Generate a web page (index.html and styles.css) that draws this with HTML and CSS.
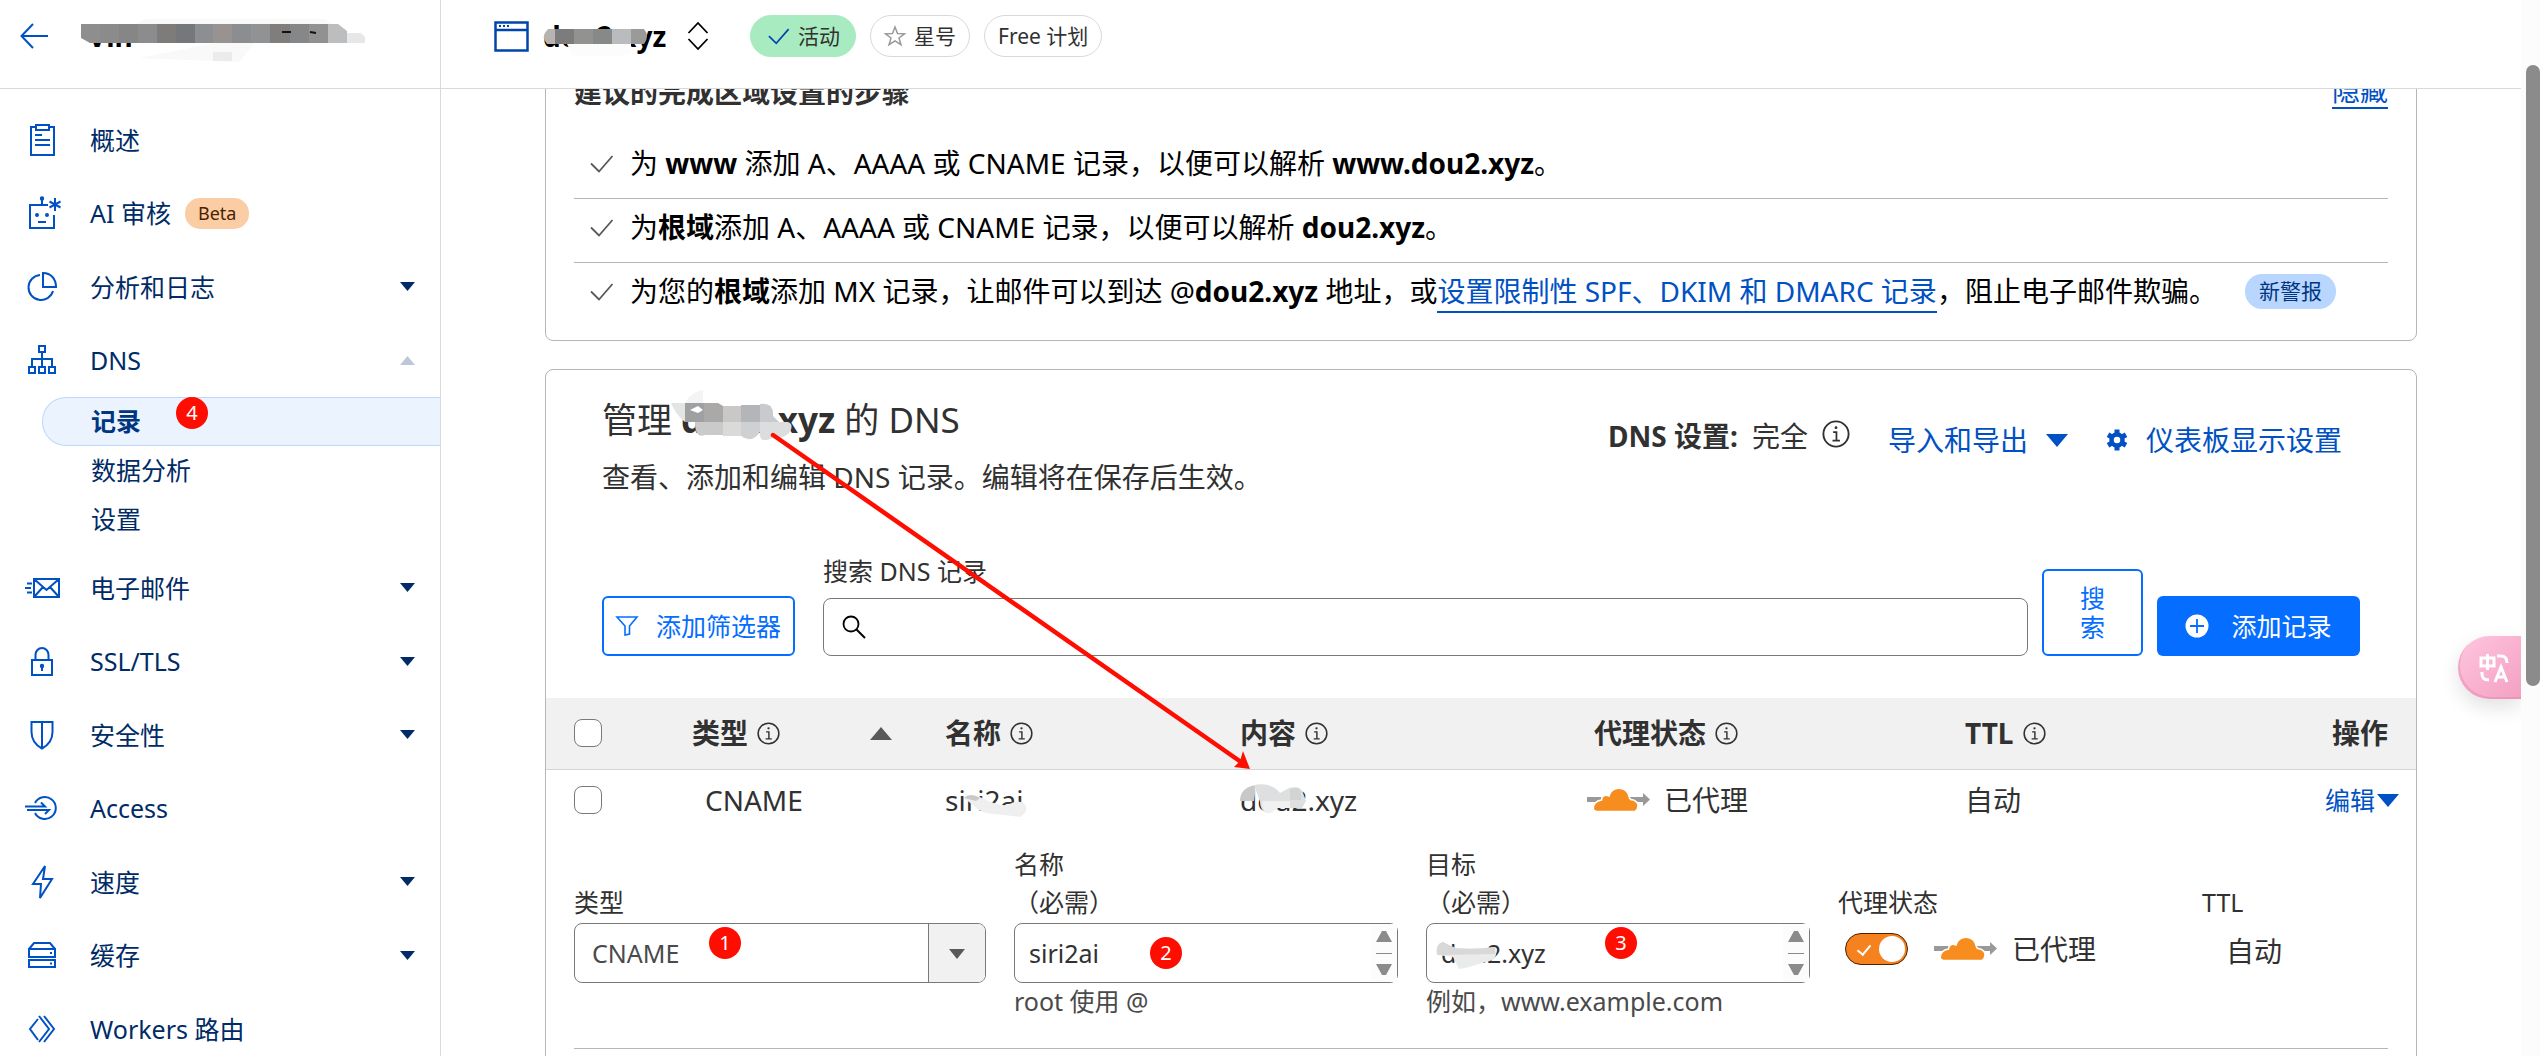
FILE: index.html
```html
<!DOCTYPE html>
<html lang="zh-CN">
<head>
<meta charset="utf-8">
<title>DNS 记录</title>
<link rel="stylesheet" href="styles.css">
</head>
<body>
<svg class="defs" aria-hidden="true">
  <symbol id="info" viewBox="0 0 24 24"><circle cx="12" cy="12" r="10.8" fill="none" stroke="currentColor" stroke-width="1.6"/><path d="M9.5 10.3h2.9v7.2M9 17.6h6.4" fill="none" stroke="currentColor" stroke-width="1.5"/><circle cx="12" cy="6.6" r="1.2" fill="currentColor"/></symbol>
  <symbol id="check" viewBox="0 0 24 18"><path d="M1 8.5l8 8L22.500 1" fill="none" stroke="currentColor" stroke-width="1.8"/></symbol>
  <symbol id="down" viewBox="0 0 22 13"><path d="M0 0h22L11 13z" fill="currentColor"/></symbol>
  <symbol id="up" viewBox="0 0 22 13"><path d="M0 13h22L11 0z" fill="currentColor"/></symbol>
  <symbol id="cloud" viewBox="0 0 63 24"><path d="M0 9h50v5H0zM50 9h6V5l7 6.500-7 6.500v-4h-6z" fill="#999"/><path d="M9 23.500h39c4-3 4.500-9-1.500-11.500-2 0-3.500-.5-4-2C40.500-3 24-2.500 22 8c-4-2-7.500 0-7.500 4C9 12.500 5.500 17 6.500 22z" fill="#f78d1e" stroke="#fff" stroke-width="1.500"/></symbol>
</svg>
<div class="app">
  <aside class="sidebar">
    <div class="account">
      <a class="back" href="#" aria-label="返回"><svg width="28" height="26" viewBox="0 0 28 26"><path d="M13 1L1.500 13 13 25M1.500 13H28" fill="none" stroke="currentColor" stroke-width="2"/></svg></a>
      <span class="masked account-name">Vin
        <svg class="mosaic account-mosaic" width="290" height="46" viewBox="0 0 290 46" aria-hidden="true">
          <path d="M64 0H244l10 7H52zM134 24h40l-16 19q-50-2-100-4z" fill="#f8f9f8"/>
          <path d="M0 5h20v19H9l-9-5z" fill="#8e8e8e"/><path d="M19 5h19v19H19z" fill="#8b8b8c"/><path d="M38 5h19v19H38z" fill="#868687"/><path d="M57 5h19v19H57z" fill="#8b8c8e"/><path d="M76 5h19v19H76z" fill="#7e7c7a"/><path d="M95 5h19v19H95z" fill="#76777a"/><path d="M114 5h18v19h-18z" fill="#8d8e91"/><path d="M132 5h19v19h-19z" fill="#989390"/><path d="M151 5h19v19h-19z" fill="#8b8d90"/><path d="M170 5h19v19h-19z" fill="#909294"/><path d="M189 5h20v19h-20z" fill="#7f7e7d"/><path d="M209 5h19v19h-19z" fill="#868788"/><path d="M228 5h19v19h-19z" fill="#919191"/><path d="M247 5h10l9 7v12h-19z" fill="#bcbdbf"/><path d="M266 14h14l4 4v6h-18z" fill="#e7e7e7"/>
          <path d="M132 33h19v9h-19z" fill="#ebebea"/><path d="M201 13h9M229 13l6 1" stroke="#111" stroke-width="2"/>
        </svg>
      </span>
    </div>
    <nav aria-label="主导航">
      <ul class="nav">
        <li><a class="nav-link" href="#"><svg class="nav-icon" viewBox="0 0 36 36"><path d="M12 5H7v28h23V5h-5M12 3h13v5H12zM11 13h7M11 18h15M11 23h15"/></svg>概述</a></li>
        <li><a class="nav-link" href="#"><svg class="nav-icon" viewBox="0 0 36 36"><path d="M24 10H6v23h24V20M18 10V3"/><circle cx="18" cy="3.500" r="1.200"/><path d="M14 27h8M31 3v13M25.500 6.500l11 6M36.500 6.500l-11 6"/><circle cx="13" cy="20" r="1"/><circle cx="23" cy="20" r="1"/></svg>AI 审核<span class="beta">Beta</span></a></li>
        <li><a class="nav-link" href="#"><svg class="nav-icon" viewBox="0 0 36 36"><path d="M16 6a12.500 12.500 0 1 0 13 16M19 4v14h13C32 10 27 4 19 4z"/></svg>分析和日志<svg class="caret"><use href="#down"/></svg></a></li>
        <li>
          <a class="nav-link open" href="#"><svg class="nav-icon" viewBox="0 0 36 36"><path d="M15 4h6v6h-6zM18 10v14M8 24v-7h20v7M5 25h6v6H5zM15 25h6v6h-6zM25 25h6v6h-6z"/></svg>DNS<svg class="caret"><use href="#up"/></svg></a>
          <ul class="subnav">
            <li><a class="sub-link current" href="#" aria-current="page">记录<span class="marker marker-4">4</span></a></li>
            <li><a class="sub-link" href="#">数据分析</a></li>
            <li><a class="sub-link" href="#">设置</a></li>
          </ul>
        </li>
        <li><a class="nav-link" href="#"><svg class="nav-icon" viewBox="0 0 36 36"><path d="M10 9h25v18H10zM10 9l12.500 11L35 9M10 27l9-10M35 27l-9-10M3 13.500h5M1 18h6M3 22.500h5"/></svg>电子邮件<svg class="caret"><use href="#down"/></svg></a></li>
        <li><a class="nav-link" href="#"><svg class="nav-icon" viewBox="0 0 36 36"><path d="M8 17h20v15H8zM11.500 17v-5a6.500 7 0 0 1 13 0v5M18 24v4"/><circle cx="18" cy="23" r="1.200"/></svg>SSL/TLS<svg class="caret"><use href="#down"/></svg></a></li>
        <li><a class="nav-link" href="#"><svg class="nav-icon" viewBox="0 0 36 36"><path d="M7.500 5h21v10c0 7-4 13-10.500 16.500C11.500 28 7.500 22 7.500 15zM18 5v26"/></svg>安全性<svg class="caret"><use href="#down"/></svg></a></li>
        <li><a class="nav-link" href="#"><svg class="nav-icon" viewBox="0 0 36 36"><path d="M11 13a11 11 0 1 1 0 10M1 16.500h20l-4-4M3 20h22l-4 4"/></svg>Access</a></li>
        <li><a class="nav-link" href="#"><svg class="nav-icon" viewBox="0 0 36 36"><path d="M21 2L9 20h8l-1 14 12-19h-9z"/></svg>速度<svg class="caret"><use href="#down"/></svg></a></li>
        <li><a class="nav-link" href="#"><svg class="nav-icon" viewBox="0 0 36 36"><path d="M5 12h26v8H5zM5 23h26v7H5zM5 12l5-6h16l5 6M26 16h2M26 26.500h2"/></svg>缓存<svg class="caret"><use href="#down"/></svg></a></li>
        <li><a class="nav-link" href="#"><svg class="nav-icon" viewBox="0 0 36 36"><path d="M14 8L6 18l8 11M15 5l10 13-10 13M20 5l10 13-10 13"/></svg>Workers 路由</a></li>
      </ul>
    </nav>
  </aside>

  <div class="content">
    <header class="topbar">
      <svg class="site-icon" width="35" height="31" viewBox="0 0 35 31"><path d="M1.500 1.500h32v28h-32zM1.500 9h32" fill="none" stroke="currentColor" stroke-width="2.500"/><path d="M5 5h2M9 5h2M13 5h2" stroke="currentColor" stroke-width="2"/></svg>
      <span class="masked domain">dou2.xyz
        <svg class="mosaic domain-mosaic" width="106" height="28" viewBox="0 0 106 28" aria-hidden="true"><path d="M24 15h64v8l-8 4H30z" fill="#fcfcfc"/><path d="M12 0H5Q-3 8 4 15h8z" fill="#b6b3b1"/><path d="M12 0h19v15H12z" fill="#7c7c7c"/><path d="M31 0h19v15H31z" fill="#929290"/><path d="M50 0h19v15H50z" fill="#868987"/><path d="M69 0h19v15H69z" fill="#babbbe"/><path d="M88 0h13q6 7 0 15H88z" fill="#9a9a99"/></svg>
      </span>
      <button class="switcher" aria-label="切换站点"><svg width="22" height="28" viewBox="0 0 22 28"><path d="M1.500 11L11 1l9.500 10M1.500 17L11 27l9.500-10" fill="none" stroke="currentColor" stroke-width="1.800"/></svg></button>
      <span class="chip chip-active"><svg width="22" height="17"><use href="#check"/></svg>活动</span>
      <button class="chip"><svg width="22" height="22" viewBox="0 0 22 22"><path d="M11 2l2.500 6.500 7 .3-5.500 4.200 2 6.700-6-3.900-6 3.900 2-6.700L1.500 8.800l7-.3z" fill="none" stroke="#999" stroke-width="1.500"/></svg>星号</button>
      <span class="chip">Free 计划</span>
    </header>

    <main class="page">
      <section class="card steps">
        <div class="steps-head"><h2>建议的完成区域设置的步骤</h2><a class="link" href="#">隐藏</a></div>
        <ul class="step-list">
          <li><svg class="step-check"><use href="#check"/></svg><span>为 <strong>www</strong> 添加 A、AAAA 或 CNAME 记录，以便可以解析 <strong>www.dou2.xyz</strong>。</span></li>
          <li><svg class="step-check"><use href="#check"/></svg><span>为<strong>根域</strong>添加 A、AAAA 或 CNAME 记录，以便可以解析 <strong>dou2.xyz</strong>。</span></li>
          <li><svg class="step-check"><use href="#check"/></svg><span>为您的<strong>根域</strong>添加 MX 记录，让邮件可以到达 @<strong>dou2.xyz</strong> 地址，或<a class="link" href="#">设置限制性 SPF、DKIM 和 DMARC 记录</a>，阻止电子邮件欺骗。</span><span class="alert">新警报</span></li>
        </ul>
      </section>

      <section class="card dns">
        <div class="dns-head">
          <div>
            <h1>管理 <span class="masked"><strong>dou2.xyz</strong>
              <svg class="mosaic title-mosaic" width="122" height="52" viewBox="0 0 122 52" aria-hidden="true"><path d="M14 13Q20 2 32 0v13z" fill="#f4f4f4"/><path d="M0 13h14v19Q4 24 0 13z" fill="#e3e5e4"/><path d="M14 13h20v19H14z" fill="#9fa0a1"/><path d="M33 13h14l5 3v16H33z" fill="#aba9a7"/><path d="M52 16h18v16H52z" fill="#c9c8c6"/><path d="M70 15h19v17H70z" fill="#b4b5b8"/><path d="M89 14q14-2 13 12l6 6H89z" fill="#c8cacd"/><path d="M24 32h28v13H34q-10 4-10-13z" fill="#cacaca"/><path d="M52 32h18v14H52z" fill="#dadad9"/><path d="M70 32h19v10q-8 12-19 4z" fill="#cfd0d1"/><path d="M89 32h28q6 2 2 10-8 8-18 6-12 6-12-4z" fill="#dcdddf"/><path d="M19 20l8-4 5 4-5 3z" fill="#fff"/></svg>
            </span> 的 DNS</h1>
            <p class="subtitle">查看、添加和编辑 DNS 记录。编辑将在保存后生效。</p>
          </div>
          <div class="dns-actions">
            <p class="dns-mode"><strong>DNS 设置:</strong><span>完全</span><svg class="info-lg"><use href="#info"/></svg></p>
            <button class="text-button">导入和导出<svg class="tri"><use href="#down"/></svg></button>
            <button class="text-button"><svg width="22" height="22" viewBox="-11 -11 22 22" fill="none" stroke="currentColor"><circle r="5.500" stroke-width="4.500"/><path d="M0-10.500v5M0 10.500v-5M9-5.200L5-3M-9 5.200L-5 3M9 5.200L5 3M-9-5.200L-5-3" stroke-width="5"/></svg>仪表板显示设置</button>
          </div>
        </div>

        <form class="toolbar">
          <button class="btn btn-outline" type="button"><svg width="22" height="20" viewBox="0 0 22 20"><path d="M1 1h20l-7.500 9v8L9 19v-9z" fill="none" stroke="currentColor" stroke-width="1.600"/></svg>添加筛选器</button>
          <div class="search">
            <label for="q">搜索 DNS 记录</label>
            <div class="search-box"><svg width="24" height="24" viewBox="0 0 24 24"><circle cx="9" cy="9" r="7.500" fill="none" stroke="currentColor" stroke-width="1.800"/><path d="M14.500 14.500L23 23" stroke="currentColor" stroke-width="2"/></svg><input id="q" type="text"></div>
          </div>
          <button class="btn btn-outline btn-search" type="button">搜索</button>
          <button class="btn btn-primary" type="button"><svg width="24" height="24" viewBox="0 0 24 24"><circle cx="12" cy="12" r="11.500" fill="#fff"/><path d="M12 5v14M5 12h14" stroke="#056dff" stroke-width="1.800"/></svg>添加记录</button>
        </form>

        <table class="records">
          <colgroup><col class="c-check"><col class="c-type"><col class="c-name"><col class="c-content"><col class="c-proxy"><col><col class="c-action"></colgroup>
          <thead>
            <tr>
              <th><input class="box" type="checkbox" aria-label="全选"></th>
              <th><div class="sort"><span class="th">类型<svg class="info"><use href="#info"/></svg></span><svg class="sort-icon"><use href="#up"/></svg></div></th>
              <th><span class="th">名称<svg class="info"><use href="#info"/></svg></span></th>
              <th><span class="th">内容<svg class="info"><use href="#info"/></svg></span></th>
              <th><span class="th">代理状态<svg class="info"><use href="#info"/></svg></span></th>
              <th><span class="th">TTL<svg class="info"><use href="#info"/></svg></span></th>
              <th class="action-head">操作</th>
            </tr>
          </thead>
          <tbody>
            <tr>
              <td><input class="box" type="checkbox" aria-label="选择记录"></td>
              <td class="type">CNAME</td>
              <td><span class="masked">siri2ai<svg class="mosaic name-mosaic" width="64" height="24" viewBox="0 0 64 24" aria-hidden="true"><path d="M0 4Q6-2 20 5t24 6q8-6 16-2 6 8-4 14-12-2-26-3T10 12z" fill="#efefef"/><path d="M0 4Q6-2 16 4l-4 3z" fill="#c9c9c9"/></svg></span></td>
              <td><span class="masked">dou2.xyz<svg class="mosaic content-mosaic" width="66" height="30" viewBox="0 0 66 30" aria-hidden="true"><path d="M0 17Q0 4 15 1v9l-1 7z" fill="#c9c8c9"/><path d="M14 1Q32-2 40 9l9-5q12-3 14 5l3 8-4 7H38l-8 5q-10 0-10-12z" fill="#dedfe0"/><path d="M50 5q10-4 11 4v7H50z" fill="#d2d3d3"/><path d="M22 17h28v7H38l-8 5q-8 0-8-12z" fill="#f0f0f0"/></svg></span></td>
              <td class="proxy"><span class="th"><svg class="cloud"><use href="#cloud"/></svg>已代理</span></td>
              <td>自动</td>
              <td class="action"><button class="edit">编辑<svg class="tri"><use href="#down"/></svg></button></td>
            </tr>
            <tr>
              <td class="editor" colspan="7">
                <form class="fields">
                  <div class="field">
                    <label for="type">类型</label>
                    <div class="control"><select id="type"><option>CNAME</option></select><svg class="select-arrow" viewBox="0 0 57 58"><path d="M0 0h57v58H0z" fill="#f1f1f1"/><path d="M.5 0v58" stroke="#797979"/><path d="M21 25h16l-8 10z" fill="#595959"/></svg><span class="marker marker-1">1</span></div>
                  </div>
                  <div class="field">
                    <label for="name">名称<br>（必需）</label>
                    <div class="control"><textarea id="name" rows="1">siri2ai</textarea><svg class="scroller" viewBox="0 0 26 58"><path d="M0 0h26v58H0z" fill="#fcfcfc"/><path d="M5 18h16l-6-11h-4zM5 40h16l-6 11h-4z" fill="#8b8b8b"/><path d="M5 29.500h16" stroke="#8b8b8b"/></svg><span class="marker marker-2">2</span></div>
                    <p class="help">root 使用 @</p>
                  </div>
                  <div class="field">
                    <label for="target">目标<br>（必需）</label>
                    <div class="control"><textarea id="target" rows="1">dou2.xyz</textarea><svg class="scroller" viewBox="0 0 26 58"><path d="M0 0h26v58H0z" fill="#fcfcfc"/><path d="M5 18h16l-6-11h-4zM5 40h16l-6 11h-4z" fill="#8b8b8b"/><path d="M5 29.500h16" stroke="#8b8b8b"/></svg><svg class="mosaic target-mosaic" width="62" height="28" viewBox="0 0 62 28" aria-hidden="true"><path d="M2 13Q0 2 8 0l12 6q20 2 40-1 4 6-2 13l-14 4q-12 4-20 5l-6-12z" fill="#eaebeb"/><path d="M2 13Q0 2 8 0l12 6q20 2 40-1v7z" fill="#d8d8d9"/></svg><span class="marker marker-3">3</span></div>
                    <p class="help">例如，www.example.com</p>
                  </div>
                  <div class="field">
                    <label for="proxied">代理状态</label>
                    <div class="switch-row"><input class="switch" id="proxied" type="checkbox" checked><svg class="cloud"><use href="#cloud"/></svg><span>已代理</span></div>
                  </div>
                  <div class="field">
                    <span class="label">TTL</span>
                    <div class="ttl-value">自动</div>
                  </div>
                </form>
              </td>
            </tr>
          </tbody>
        </table>
        <svg class="pointer" width="484" height="340" viewBox="0 0 484 340" aria-hidden="true"><path d="M3 3l468 327" stroke="#ff0d00" stroke-width="4.500" stroke-linecap="round"/><path d="M480 337l-16-2 6-6 3-10z" fill="#ff0d00"/></svg>
      </section>
    </main>

    <button class="translate" aria-label="翻译"><svg width="32" height="32" viewBox="0 0 32 32" fill="none" stroke="#fff" stroke-width="3"><path d="M2 6h13v8H2zM8.500 2v16M18 4h4q6 0 6 7M3 20v2q0 6 7 6M16 30l6-15 6 15M18 25h8"/></svg></button>
  </div>
  <div class="scrollbar" aria-hidden="true"><div class="thumb"></div></div>
</div>
</body>
</html>
```

FILE: styles.css
```css
* { box-sizing: border-box; }

body {
  margin: 0;
  background: #fff;
  color: #313131;
  font-family: "Noto Sans", "Noto Sans CJK SC", sans-serif;
  font-size: 28px;
  line-height: 42px;
}

h1, h2, p, ul { margin: 0; padding: 0; }
ul { list-style: none; }
a { color: inherit; text-decoration: none; }
svg { flex: none; overflow: visible; }
button, input, select, textarea { font: inherit; color: inherit; margin: 0; }
button { background: none; border: 0; padding: 0; cursor: pointer; }

.defs { position: absolute; width: 0; height: 0; }

.app {
  display: grid;
  grid-template-columns: 441px minmax(0, 1fr) 19px;
  height: 100vh;
  overflow: hidden;
}

/* Sidebar */
.sidebar { border-right: 1px solid #d9d9d9; overflow: hidden; }

.account {
  display: flex;
  align-items: center;
  height: 89px;
  padding: 0 20px 16px;
  gap: 40px;
  border-bottom: 1px solid #d9d9d9;
}
.back { display: flex; color: #0051c3; }
.account-name, .domain { color: #000; font-weight: 700; }

.masked { position: relative; white-space: nowrap; }
.mosaic { position: absolute; pointer-events: none; }
.account-mosaic { left: -7px; top: 4px; }
.domain-mosaic { left: 0; top: 14px; }
.title-mosaic { left: -10px; top: -6px; }
.name-mosaic { left: 19px; top: 13px; }
.content-mosaic { left: 0; top: 3px; }
.target-mosaic { left: 8px; top: 18px; }

.nav { padding-top: 14px; color: #002b66; font-size: 25px; }
.nav-link {
  display: flex;
  align-items: center;
  height: 73px;
  padding: 0 25px 0 24px;
}
.nav > li:nth-child(even) > .nav-link { height: 74px; }
.nav-icon {
  width: 36px;
  height: 36px;
  margin-right: 30px;
  fill: none;
  stroke: #0051c3;
  stroke-width: 2;
}
.caret { width: 15px; height: 9px; margin-left: auto; }
.open .caret { color: #bcc8d8; }
.beta {
  margin-left: 14px;
  padding: 0 13px;
  border-radius: 15px;
  background: #fbcda5;
  color: #4b2100;
  font-size: 18px;
  line-height: 31px;
}
.subnav { padding-bottom: 7px; }
.sub-link {
  display: block;
  position: relative;
  height: 49px;
  margin-left: 42px;
  padding-left: 48px;
  border: 1px solid transparent;
  border-right: 0;
  line-height: 47px;
}
.current {
  border-color: #bcd8ff;
  border-radius: 24px 0 0 24px;
  background: #ebf3ff;
  color: #003681;
  font-weight: 700;
}

.marker {
  position: absolute;
  width: 32px;
  height: 32px;
  border-radius: 50%;
  background: #ff0d00;
  color: #fff;
  font-size: 20px;
  font-weight: 400;
  line-height: 32px;
  text-align: center;
}
.marker-1 { left: 134px; top: 3px; }
.marker-2 { left: 135px; top: 13px; }
.marker-3 { left: 178px; top: 3px; }
.marker-4 { left: 133px; top: -1px; }

/* Top bar */
.content { position: relative; overflow: hidden; }
.topbar {
  position: relative;
  z-index: 1;
  display: flex;
  align-items: center;
  height: 89px;
  padding: 0 53px 16px;
  border-bottom: 1px solid #d9d9d9;
  background: #fff;
}
.site-icon { margin-right: 14px; color: #0045ad; }
.domain { width: 130px; }
.switcher { display: flex; margin: 0 41px 0 14px; color: #000; }
.chip {
  display: flex;
  align-items: center;
  gap: 8px;
  height: 42px;
  margin-right: 14px;
  padding: 0 13px;
  border: 1px solid #d9d9d9;
  border-radius: 21px;
  font-size: 21px;
}
.chip-active { padding: 0 15px 0 17px; border-color: #a9ebc0; background: #a9ebc0; }
.chip-active svg { color: #0045ad; }

/* Cards */
.page { padding: 0 104px; }
.card { position: relative; border: 1px solid #b6b6b6; border-radius: 8px; }
.link {
  padding-bottom: 1px;
  border-bottom: 2px solid #0051c3;
  color: #0051c3;
  line-height: 32px;
}

.steps { margin-top: -47px; padding: 28px; }
.steps-head {
  display: flex;
  align-items: flex-start;
  justify-content: space-between;
  margin-bottom: 22px;
}
.steps-head h2 { font-size: 28px; line-height: 42px; }
.steps-head .link { padding: 2px 0 0; line-height: 34px; }
.step-list { color: #000; }
.step-list li {
  display: flex;
  padding: 7px 0 14px 16px;
  border-bottom: 1px solid #b6b6b6;
}
.step-list li:last-child { padding-bottom: 0; border-bottom: 0; }
.step-check { width: 24px; height: 18px; margin: 13px 16px 0 0; color: #595959; }
.alert {
  align-self: center;
  margin-left: 28px;
  padding: 0 14px;
  border-radius: 17px;
  background: #b9d6ff;
  color: #003681;
  font-size: 21px;
  line-height: 35px;
}

.dns { margin-top: 28px; }
.dns-head { display: flex; justify-content: space-between; padding: 26px 56px; }
h1 { font-size: 35px; font-weight: 400; line-height: 47px; }
.subtitle { margin-top: 13px; }
.dns-actions { display: flex; padding-top: 19px; }
.dns-mode { display: flex; gap: 14px; margin-right: 18px; }
.info-lg { width: 28px; height: 28px; margin-top: 5px; }
.text-button {
  display: flex;
  align-items: center;
  gap: 18px;
  height: 50px;
  padding: 0 18px 0 20px;
  color: #0051c3;
}
.tri { width: 22px; height: 13px; }

.toolbar { display: flex; align-items: flex-end; gap: 14px; padding: 30px 56px 42px; }
.btn {
  display: flex;
  align-items: center;
  justify-content: center;
  height: 60px;
  border-radius: 6px;
  font-size: 25px;
}
.btn-outline { gap: 18px; width: 193px; border: 2px solid #056dff; color: #056dff; }
.btn-search { width: 101px; height: 87px; padding: 0 36px; line-height: 29px; }
.btn-primary { gap: 22px; width: 203px; background: #056dff; color: #fff; }
.search { flex: 1; margin-left: 14px; font-size: 25px; }
.search label { display: block; margin-bottom: 9px; line-height: 35px; }
.search-box {
  display: flex;
  align-items: center;
  height: 58px;
  padding: 0 18px;
  gap: 14px;
  border: 1px solid #797979;
  border-radius: 8px;
  color: #000;
}
.search-box input { flex: 1; min-width: 0; border: 0; outline: 0; }

/* Records */
.records { width: 100%; border-collapse: collapse; table-layout: fixed; }
.records th, .records td { padding: 0; text-align: left; }
.records th { height: 71px; border-bottom: 1px solid #d5d5d5; background: #f1f1f1; }
.records td { height: 62px; }
.c-check { width: 146px; }
.c-type { width: 253px; }
.c-name { width: 295px; }
.c-content { width: 354px; }
.c-proxy { width: 371px; }
.c-action { width: 160px; }
.box {
  display: block;
  appearance: none;
  width: 28px;
  height: 28px;
  margin-left: 28px;
  border: 1px solid #797979;
  border-radius: 8px;
  background: #fff;
}
.th { display: flex; align-items: center; gap: 9px; }
.info { width: 23px; height: 23px; }
.sort { display: flex; align-items: center; justify-content: space-between; width: 200px; }
.sort-icon { width: 22px; height: 13px; color: #595959; }
.records .type { padding-left: 13px; }
.records .action-head { padding-right: 28px; text-align: right; }
.records .action { padding-right: 17px; }
.proxy .th { gap: 14px; margin-left: -7px; }
.cloud { width: 63px; height: 24px; }
.edit {
  display: flex;
  align-items: center;
  gap: 2px;
  margin-left: auto;
  color: #0051c3;
  font-size: 25px;
}

.records .editor { padding: 14px 28px 60px; }
.fields {
  display: grid;
  grid-template-columns: 412fr 384fr 384fr 336fr 186fr;
  gap: 28px;
  padding-bottom: 26px;
  border-bottom: 1px solid #b6b6b6;
  font-size: 25px;
  line-height: 38px;
}
.field { display: grid; grid-template-rows: 76px 60px 37px; row-gap: 2px; min-width: 0; }
.field label, .label { align-self: end; }
.control {
  position: relative;
  display: flex;
  height: 60px;
  border: 1px solid #797979;
  border-radius: 8px;
}
.control select, .control textarea {
  flex: 1;
  min-width: 0;
  border: 0;
  outline: 0;
  background: none;
  resize: none;
  overflow: hidden;
  padding: 10px 14px;
  line-height: 38px;
}
.control select { appearance: none; padding: 0 17px; color: #4a4a4a; }
.select-arrow { width: 57px; height: 58px; border-radius: 0 7px 7px 0; overflow: hidden; }
.scroller { width: 26px; height: 58px; }
.help { margin-top: -2px; color: #4a4a4a; line-height: 37px; }
.switch-row { display: flex; align-items: center; height: 52px; font-size: 28px; }
.switch-row .cloud { margin: 0 15px 0 26px; }
.switch {
  position: relative;
  appearance: none;
  width: 63px;
  height: 32px;
  margin-left: 7px;
  border: 1px solid #4b2100;
  border-radius: 16px;
  background: #f6821f;
}
.switch::before {
  content: "";
  position: absolute;
  left: 14px;
  top: 8px;
  width: 6px;
  height: 11px;
  border: solid #fff;
  border-width: 0 2px 2px 0;
  transform: rotate(40deg);
}
.switch::after {
  content: "";
  position: absolute;
  right: 2px;
  top: 2px;
  width: 26px;
  height: 26px;
  border-radius: 50%;
  background: #fff;
}
.ttl-value { padding-left: 24px; font-size: 28px; line-height: 56px; }

.pointer { position: absolute; left: 224px; top: 62px; }

.translate {
  position: absolute;
  right: 0;
  top: 636px;
  display: flex;
  align-items: center;
  width: 63px;
  height: 63px;
  padding-left: 21px;
  border-radius: 32px 0 0 32px;
  background: linear-gradient(135deg, #ffc6df, #f3a0c2);
  box-shadow: 0 8px 20px rgba(0, 0, 0, .12), inset 2px -2px 0 rgba(225, 120, 165, .35);
}

.scrollbar { padding: 65px 0 0 5px; background: #fcfcfc; }
.thumb { height: 621px; border-radius: 7px; background: #8b8b8b; }
```
